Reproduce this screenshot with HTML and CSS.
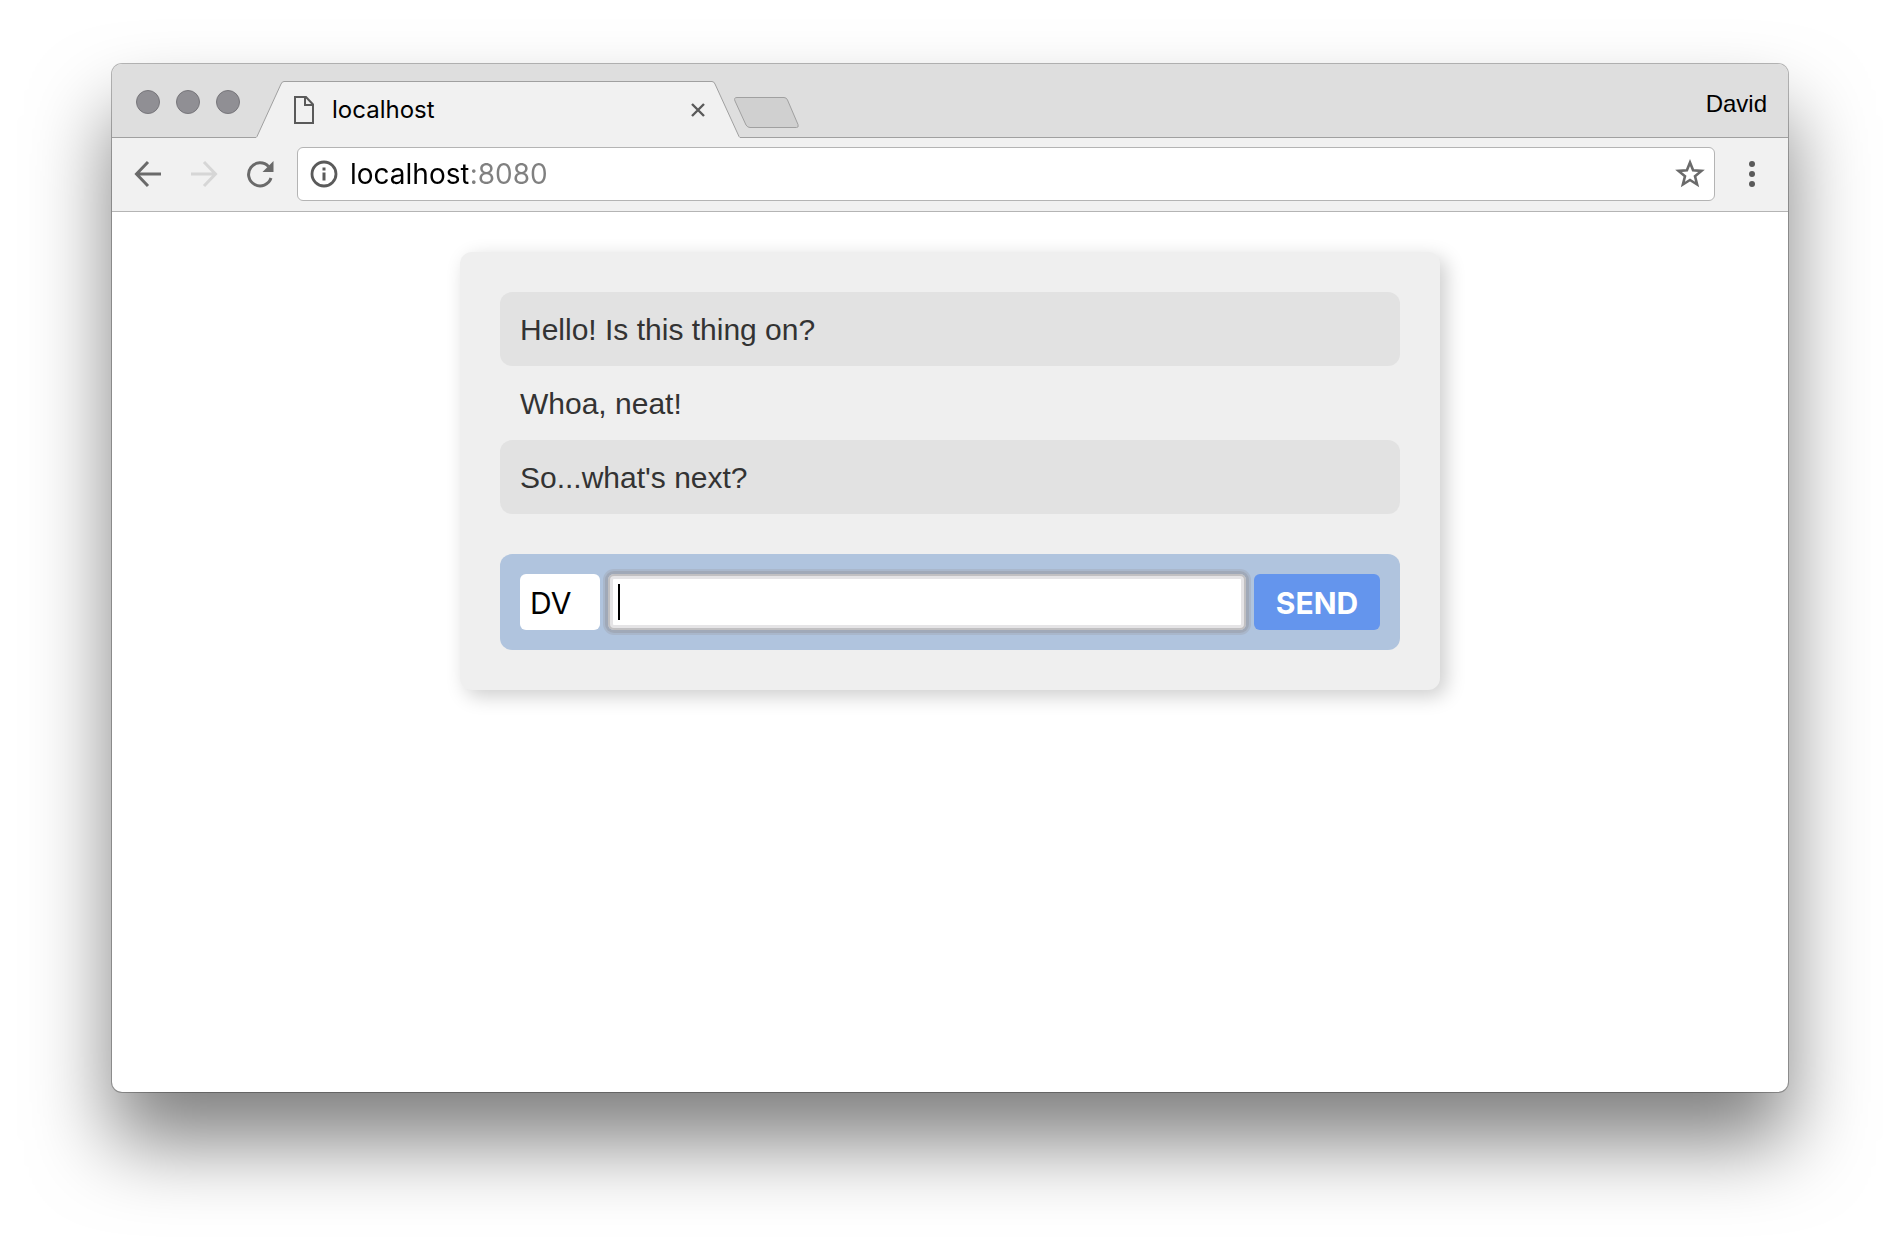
FILE: index.html
```html
<!DOCTYPE html>
<html lang="en">
<head>
  <meta charset="UTF-8">
  <title>localhost</title>
  <meta name="viewport" content="width=device-width, initial-scale=1">
  <link rel="stylesheet" href="styles.css">
</head>
<body>
  <div class="window">
    <div class="tabstrip">
      <div class="lights">
        <span class="light"></span>
        <span class="light"></span>
        <span class="light"></span>
      </div>
      <div class="tab">
        <svg class="tab-shape" width="484" height="58" viewBox="0 0 484 58">
          <path d="M0 56.5 L1 55.5 L25 3 Q26 .5 28 .5 H456 Q458 .5 459 3 L483 55.5 L484 56.5 V58 H0 Z" fill="#f1f1f1"/>
          <path d="M0 56.5 L1 55.5 L25 3 Q26 .5 28 .5 H456 Q458 .5 459 3 L483 55.5 L484 56.5" fill="none" stroke="#a0a0a0"/>
        </svg>
        <svg class="page-icon" width="20" height="28" viewBox="0 0 20 28">
          <path d="M1 1 H12 L19 8.500 V27 H1 Z M11 1 V9 H19" fill="none" stroke="#5a5a5a" stroke-width="2"/>
        </svg>
        <span class="tab-title">localhost</span>
        <button class="tab-close" type="button" aria-label="Close tab">
          <svg width="14" height="14" viewBox="0 0 14 14">
            <path d="M1 1 L13 13 M13 1 L1 13" stroke="#5a5a5a" stroke-width="2.400"/>
          </svg>
        </button>
      </div>
      <button class="new-tab" type="button" aria-label="New tab">
        <svg width="66" height="32" viewBox="0 0 66 32">
          <path d="M3 .5 H50 Q52.500 .5 53.500 3 L64 27.500 Q65 30.500 62.500 30.500 H16 Q13.500 30.500 12 28 L1 4 Q-.5 .5 3 .5 Z" fill="#d0d0d0" stroke="#a0a0a0"/>
        </svg>
      </button>
      <span class="profile">David</span>
    </div>

    <div class="toolbar">
      <button class="nav-btn" type="button" aria-label="Back">
        <svg width="28" height="28" viewBox="0 0 28 28">
          <path d="M27 14 H3 M14 2 L2.500 14 L14 26" fill="none" stroke="#6a6a6a" stroke-width="3"/>
        </svg>
      </button>
      <button class="nav-btn" type="button" aria-label="Forward" disabled>
        <svg width="28" height="28" viewBox="0 0 28 28">
          <path d="M1 14 H25 M14 2 L25.500 14 L14 26" fill="none" stroke="#d6d6d6" stroke-width="3"/>
        </svg>
      </button>
      <button class="nav-btn" type="button" aria-label="Reload">
        <svg width="28" height="28" viewBox="0 0 28 28">
          <path d="M22.500 6.500 A11.500 11.500 0 1 0 25 18" fill="none" stroke="#6a6a6a" stroke-width="3"/>
          <path d="M27.500 1 V12 H16.500 Z" fill="#6a6a6a"/>
        </svg>
      </button>
      <div class="omnibox">
        <svg width="28" height="28" viewBox="0 0 28 28">
          <circle cx="14" cy="14" r="12" fill="none" stroke="#5a5a5a" stroke-width="2.800"/>
          <path d="M12.500 7.500 h3 v3 h-3 Z M12.500 12.500 h3 v8 h-3 Z" fill="#5a5a5a"/>
        </svg>
        <input class="address" type="text" value="localhost:8080" aria-label="Address" spellcheck="false">
        <button class="bookmark" type="button" aria-label="Bookmark this page">
          <svg width="30" height="30" viewBox="0 0 30 30">
            <path d="M15 3.500 L18.100 11.300 L26.500 11.900 L20 17.300 L22.100 25.500 L15 21 L7.900 25.500 L10 17.300 L3.500 11.900 L11.900 11.300 Z" fill="none" stroke="#6a6a6a" stroke-width="2.600"/>
          </svg>
        </button>
      </div>
      <button class="menu" type="button" aria-label="Menu">
        <svg width="6" height="26" viewBox="0 0 6 26">
          <g fill="#5a5a5a">
            <circle cx="3" cy="3" r="3"/>
            <circle cx="3" cy="13" r="3"/>
            <circle cx="3" cy="23" r="3"/>
          </g>
        </svg>
      </button>
    </div>

    <main class="page">
      <div class="chat">
        <ul class="messages">
          <li>Hello! Is this thing on?</li>
          <li>Whoa, neat!</li>
          <li>So...what's next?</li>
        </ul>
        <form class="composer" onsubmit="return false;">
          <input class="initials" type="text" value="DV" aria-label="Initials">
          <input class="message" type="text" aria-label="Message" autofocus>
          <button class="send" type="submit">SEND</button>
        </form>
      </div>
    </main>
  </div>
</body>
</html>
```
FILE: styles.css
```css
* {
  box-sizing: border-box;
}

body {
  margin: 0;
  min-height: 100vh;
  padding: 64px 112px 160px;
  display: flex;
  background: #fff;
  font-family: "Liberation Sans", Helvetica, Arial, sans-serif;
}

button {
  padding: 0;
  border: 0;
  background: none;
}

input {
  min-width: 0;
  border: 0;
  outline: none;
}

svg {
  display: block;
  flex: none;
}

/* browser window */
.window {
  flex: 1;
  min-width: 0;
  display: flex;
  flex-direction: column;
  border-radius: 10px;
  background: #fff;
  box-shadow: 0 0 0 1px rgba(0, 0, 0, 0.28), 0 50px 80px rgba(0, 0, 0, 0.5);
}

.tabstrip {
  display: flex;
  height: 74px;
  border-bottom: 1px solid #a0a0a0;
  border-radius: 10px 10px 0 0;
  background: #dedede;
}

.lights {
  display: flex;
  gap: 16px;
  padding: 26px 16px 0 24px;
}

.light {
  width: 24px;
  height: 24px;
  border: 1px solid #77767b;
  border-radius: 50%;
  background: #908f94;
}

.tab {
  position: relative;
  display: flex;
  align-items: center;
  width: 484px;
  height: 58px;
  margin-top: 17px;
  padding: 0 35px 0 38px;
}

.tab-shape {
  position: absolute;
  top: 0;
  left: 0;
}

.page-icon,
.tab-title,
.tab-close {
  position: relative;
}

.tab-title {
  flex: 1;
  margin-left: 18px;
  font: 24px/28px Inter, sans-serif;
}

.new-tab {
  align-self: flex-start;
  margin: 33px 0 0 -6px;
}

.profile {
  margin-left: auto;
  padding: 26px 21px 0 0;
  font-size: 24px;
  line-height: 28px;
}

.toolbar {
  display: flex;
  align-items: center;
  height: 74px;
  padding: 0 33px 1px 22px;
  border-bottom: 1px solid #b4b4b4;
  background: #f1f1f1;
}

.nav-btn {
  margin-right: 28px;
}

.omnibox {
  flex: 1;
  min-width: 0;
  display: flex;
  align-items: center;
  height: 54px;
  margin: 0 34px 0 -5px;
  padding: 0 9px 0 12px;
  border: 1px solid #b4b4b4;
  border-radius: 6px;
  background: #fff;
}

/* host in black, port in grey */
.address {
  flex: 1;
  margin-left: 12px;
  padding: 0;
  font: 28px/36px Inter, sans-serif;
  color: #000;
  background: linear-gradient(to right, #000 118px, #808080 118px);
  -webkit-background-clip: text;
  background-clip: text;
  -webkit-text-fill-color: transparent;
}

/* chat page */
.page {
  flex: 1;
  padding: 40px;
}

.chat {
  max-width: 980px;
  margin: 0 auto;
  padding: 40px;
  border-radius: 12px;
  background: #efefef;
  box-shadow: 6px 6px 20px rgba(0, 0, 0, 0.2);
}

.messages {
  margin: 0 0 40px;
  padding: 0;
  list-style: none;
  color: #333;
}

.messages li {
  padding: 21px 20px 19px;
  border-radius: 12px;
  font-size: 30px;
  line-height: 34px;
}

.messages li:nth-child(odd) {
  background: #e2e2e2;
}

.composer {
  display: flex;
  gap: 8px;
  padding: 20px;
  border-radius: 12px;
  background: #b0c4de;
}

.composer input,
.send {
  height: 56px;
  border-radius: 6px;
  font: 30px/36px Inter, sans-serif;
}

.initials {
  width: 80px;
  padding: 2px 10px 0;
}

.message {
  flex: 1;
  padding: 2px 10px 0;
  caret-color: transparent;
  background: linear-gradient(#000, #000) 10px 10px / 2px 36px no-repeat #fff;
  box-shadow:
    inset 0 0 0 2px #c1c0c2,
    inset 0 0 0 5px #e5e4e6,
    0 0 0 3px #a0a9b8,
    0 0 0 5px #a9b7cb;
}

.composer .send {
  width: 126px;
  padding-top: 2px;
  font-weight: 700;
  color: #fff;
  background: #6495ed;
}
```
